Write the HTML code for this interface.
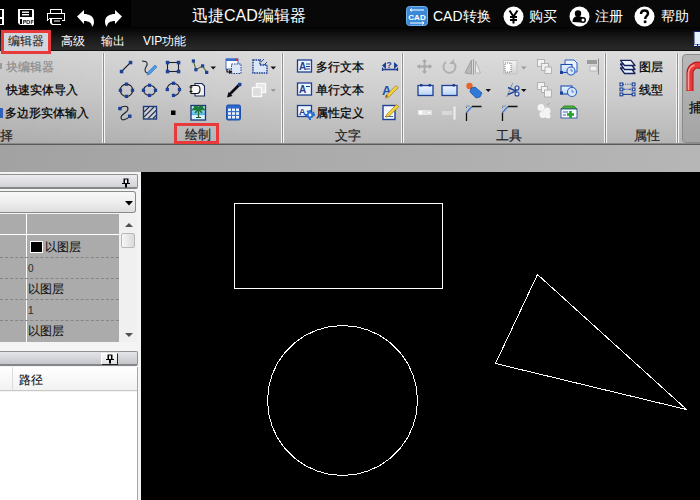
<!DOCTYPE html>
<html><head><meta charset="utf-8">
<style>
*{margin:0;padding:0;box-sizing:border-box}
html,body{width:700px;height:500px;overflow:hidden;background:#000;font-family:"Liberation Sans",sans-serif}
.a{position:absolute}
#title{left:0;top:0;width:700px;height:28px;background:linear-gradient(90deg,#000 131px,#080808 131px)}
#menu{left:0;top:27px;width:700px;height:23px;background:linear-gradient(#020202,#1a1a1a 50%,#2a2a2a)}
.wt{color:#fff;font-size:14px;line-height:16px;white-space:nowrap}
.mt{color:#fff;font-size:12px;line-height:14px;white-space:nowrap}
#ribbon{left:0;top:50px;width:700px;height:95px;background:linear-gradient(90deg,rgba(0,0,0,.05),rgba(0,0,0,0) 40%),linear-gradient(#dcdcdc,#cecece 45%,#b6b6b6);border-top:1px solid #111;border-bottom:1px solid #5a5a5a;box-shadow:inset 0 -1px 0 #8a8a8a}
.sep{width:3px;height:90px;background:linear-gradient(90deg,#f2f2f2 33%,#8e8e8e 33%,#8e8e8e 66%,#f6f6f6 66%)}
.rt{color:#000;font-size:12px;line-height:14px;white-space:nowrap;-webkit-text-stroke:0.25px #000}
.pt{color:#111;font-size:12px;line-height:14px;white-space:nowrap;-webkit-text-stroke:0.1px #111}
.lbl{color:#222;font-size:13px;line-height:14px;white-space:nowrap;-webkit-text-stroke:0.2px #222}
#band{left:0;top:145px;width:700px;height:27px;background:linear-gradient(90deg,#a2a2a2,#b6b6b6)}
#canvas{left:141px;top:172px;width:559px;height:328px;background:#000}
#panel{left:0;top:172px;width:141px;height:328px;background:#ececec}
</style></head><body>
<div id="title" class="a"></div>
<div id="menu" class="a"></div>
<div class="a wt" style="left:192px;top:7px;font-size:16px;line-height:18px">迅捷CAD编辑器</div>
<svg class="a" style="left:0;top:0" width="130" height="30">
<g fill="#fff">
<rect x="-2" y="9" width="6" height="16"/>
<rect x="-2" y="10" width="4" height="7" fill="#000"/>
<rect x="-2" y="19" width="4" height="5" fill="#000"/>
<path d="M18 9h15l1 1v15H20l-2-2z"/>
<rect x="20" y="10" width="12" height="7" fill="#000"/>
<rect x="22" y="11.5" width="7" height="1.4"/>
<rect x="22" y="14" width="7" height="1.4"/>
<rect x="20" y="19" width="2" height="5" fill="#000"/>
<rect x="22" y="19" width="12" height="6" fill="#fff"/>
<g fill="#444"><path d="M23 20h2.2a1.2 1.2 0 0 1 0 2.4H24v1.6h-1zM24 21v0.6h1.1v-0.6z"/><path d="M26.5 20h1.8c1.4 0 1.9 0.8 1.9 2s-0.5 2-1.9 2h-1.8zM27.5 21v2h0.7c0.7 0 0.9-0.4 0.9-1s-0.2-1-0.9-1z"/><path d="M30.8 20h2.7v1h-1.7v0.6h1.5v1h-1.5v1.4h-1z"/></g>
<path d="M50 9h12v4h3v8h-3v-2h-1v6H52l-2-2v-4h-2v2h-1v-8h3z M51 10v3h10v-3z M48 14v6h1v-2h13v2h2v-6z M52 19v4l1 1h8v-5z" fill-rule="evenodd"/>
<rect x="62" y="14.5" width="1.5" height="1.5" fill="#000"/>
<rect x="54" y="20.5" width="6" height="1" fill="#fff"/>
<path d="M77 16.5l7-6.5v4c5 0 10 2 10 8 0 2-1 4-2 5 0-4-3-6-8-6v3z"/>
<path d="M122 16.5l-7-6.5v4c-5 0-10 2-10 8 0 2 1 4 2 5 0-4 3-6 8-6v3z"/>
</g></svg>
<svg class="a" style="left:406px;top:6px" width="22" height="20">
<rect x="0.5" y="0.5" width="21" height="19" rx="3" fill="#3b88d6" stroke="#6fb0ee"/>
<text x="11" y="14" text-anchor="middle" font-size="8" font-weight="bold" fill="#fff" font-family="Liberation Sans">CAD</text>
<path d="M4 4h14M4 4l2-1.5M4 4l2 1.5M4 17h14M18 17l-2-1.5M18 17l-2 1.5" stroke="#fff" stroke-width="1" fill="none"/>
</svg>
<div class="a wt" style="left:433px;top:8px">CAD转换</div>
<svg class="a" style="left:503px;top:6px" width="21" height="21">
<circle cx="10.5" cy="10.5" r="10" fill="#fff"/>
<path d="M6.5 4.5l4 6 4-6M10.5 10.5v7M7 11h7M7 14h7" stroke="#000" stroke-width="2" fill="none"/>
</svg>
<div class="a wt" style="left:529px;top:8px">购买</div>
<svg class="a" style="left:569px;top:6px" width="21" height="21">
<circle cx="10.5" cy="10.5" r="10" fill="#fff"/>
<circle cx="9" cy="7.5" r="3.2" fill="#000"/>
<path d="M3.5 16c0-4 2.5-6 5.5-6s4 1 4.5 2l-1 4.5z" fill="#000"/>
<circle cx="14" cy="14" r="3" fill="#000"/><circle cx="14" cy="14" r="1.5" fill="#fff"/>
</svg>
<div class="a wt" style="left:595px;top:8px">注册</div>
<svg class="a" style="left:634px;top:6px" width="21" height="21">
<circle cx="10.5" cy="10.5" r="10" fill="#fff"/>
<path d="M7 8c0-2.2 1.6-3.5 3.6-3.5S14 5.8 14 7.6c0 2.4-2.7 2.6-2.7 4.6v0.8" stroke="#000" stroke-width="2.4" fill="none"/>
<rect x="9.8" y="14.5" width="2.6" height="2.6" fill="#000"/>
</svg>
<div class="a wt" style="left:661px;top:8px">帮助</div>
<svg class="a" style="left:693px;top:31px" width="7" height="16">
<rect x="0" y="0" width="7" height="16" fill="#14206a"/><rect x="1.5" y="1" width="5.5" height="12" fill="#e6f2fc"/><rect x="1" y="13.5" width="3" height="1.5" fill="#f0f0f0"/><rect x="5" y="13.5" width="2" height="1.5" fill="#c8ecf0"/>
</svg>
<div class="a" style="left:1px;top:30px;width:50px;height:24px;border:3px solid #e8393b;background:#d2d5db;z-index:5"></div>
<div class="a mt" style="left:8px;top:34px;color:#111;z-index:6">编辑器</div>
<div class="a mt" style="left:61px;top:34px">高级</div>
<div class="a mt" style="left:101px;top:34px">输出</div>
<div class="a mt" style="left:143px;top:34px">VIP功能</div>

<div id="ribbon" class="a">
</div>
<div class="a sep" style="left:102px;top:53px"></div>
<div class="a sep" style="left:281px;top:53px"></div>
<div class="a sep" style="left:401px;top:53px"></div>
<div class="a sep" style="left:604px;top:53px"></div>
<div class="a sep" style="left:676px;top:53px"></div>

<svg class="a" style="left:0;top:0" width="700" height="145">
<defs>
<linearGradient id="lb" x1="0" y1="0" x2="0" y2="1"><stop offset="0" stop-color="#eef5ff"/><stop offset="1" stop-color="#b9d3f3"/></linearGradient>
<linearGradient id="gb" x1="0" y1="0" x2="0" y2="1"><stop offset="0" stop-color="#f5f5f5"/><stop offset="1" stop-color="#cfcfcf"/></linearGradient>
</defs>
<!-- group1 partial icons -->
<rect x="0" y="63" width="2" height="6" fill="#9a9a9a"/>
<rect x="0" y="108" width="3" height="10" fill="#2f62b8"/>
<!-- draw: line -->
<g stroke="#1a2233" stroke-width="1.1" fill="none">
<path d="M121.5 71.5L130.5 62.5"/>
<rect x="167.5" y="62.5" width="11" height="9"/>
<circle cx="126.5" cy="90.3" r="6.2"/>
<ellipse cx="149.5" cy="90.3" rx="6" ry="5"/>
<path d="M167 89.5A6.3 6.3 0 1 1 173.5 95.8"/>
<path d="M120 108.5c3-3 8-3 8 0.5s-7 5-7 8.5 5 3 8.5-1"/>
<path d="M142 61c6 0 6 3 4 6s-1 6 2 6"/>
</g>
<g fill="#1d3f94">
<rect x="119.8" y="69.8" width="3.5" height="3.5"/><rect x="128.8" y="60.8" width="3.5" height="3.5"/>
<rect x="165.8" y="60.8" width="3.5" height="3.5"/><rect x="176.8" y="60.8" width="3.5" height="3.5"/>
<rect x="165.8" y="69.8" width="3.5" height="3.5"/><rect x="176.8" y="69.8" width="3.5" height="3.5"/>
<rect x="124.85" y="82.55" width="3.3" height="3.3"/><rect x="124.85" y="94.75" width="3.3" height="3.3"/>
<rect x="118.75" y="88.65" width="3.3" height="3.3"/><rect x="130.85" y="88.65" width="3.3" height="3.3"/>
<rect x="147.85" y="83.65" width="3.3" height="3.3"/><rect x="147.85" y="93.75" width="3.3" height="3.3"/>
<rect x="141.85" y="88.65" width="3.3" height="3.3"/><rect x="153.85" y="88.65" width="3.3" height="3.3"/>
<rect x="171.85" y="81.65" width="3.3" height="3.3"/><rect x="165.65" y="87.85" width="3.3" height="3.3"/>
<rect x="177.85" y="87.85" width="3.3" height="3.3"/><rect x="171.85" y="93.75" width="3.3" height="3.3"/>
<rect x="118.2" y="106.8" width="3.5" height="3.5"/><rect x="128" y="114.5" width="3.5" height="3.5"/>
</g>
<path d="M148 72l7-7 2 2-7 7-3 1z" fill="#4a9be8" stroke="#2a6fc0" stroke-width="0.6"/>
<!-- hatch -->
<rect x="143.5" y="106.5" width="13" height="12.5" fill="#c8d3e6" stroke="#1f3a7a" stroke-width="1.4"/>
<path d="M144 112l5-5M144 117l10-10M148 118.5l8-8M153 118.5l3-3" stroke="#333" stroke-width="1.1"/>
<rect x="171" y="110.5" width="4.5" height="4.5" fill="#000"/>
<!-- polyline -->
<path d="M193.4 61L195.9 69.7 202.6 65.9 206.7 72.4" stroke="#556b2f" stroke-width="1.1" fill="none"/>
<g fill="#1d3f94"><rect x="191.8" y="59.4" width="3.2" height="3.2"/><rect x="194.3" y="68.1" width="3.2" height="3.2"/><rect x="201" y="64.3" width="3.2" height="3.2"/><rect x="205.1" y="70.8" width="3.2" height="3.2"/></g>
<path d="M210.5 66.5h5.5l-2.75 3z" fill="#111"/>
<!-- block insert -->
<rect x="226" y="59" width="12" height="10" fill="#fff" stroke="#3a6fc8" stroke-width="1"/>
<rect x="226" y="58.5" width="9" height="2.5" fill="#3a6fc8"/><rect x="235" y="58.5" width="3" height="2.5" fill="#c8304a"/>
<rect x="231.5" y="64" width="9.5" height="9.5" fill="#dce8f8" stroke="#24408a" stroke-width="1" stroke-dasharray="1.5 1"/>
<path d="M227 69v3h4M229 70.5l2.5 1.5-2.5 1.5" stroke="#111" stroke-width="1.2" fill="none"/>
<!-- hatch boundary -->
<path d="M253 60h7v5h7v8h-14z" fill="#dbe7f7" stroke="#1d3f94" stroke-width="1.4" stroke-dasharray="1.6 0.8"/>
<path d="M261 59l-2 2M264 59l-3 3M267 62l-3 3" stroke="#1d3f94" stroke-width="0.9"/>
<path d="M270.5 66.5h5.5l-2.75 3z" fill="#111"/>
<!-- copy clip -->
<path d="M195 83.5h7l2.5 2.5v10h-9.5z" fill="#f2f2f2" stroke="#1a2a5a" stroke-width="1.1"/>
<path d="M191 85.5h6c2.5 0 3 2 3 4s-0.5 4-3 4h-6z" fill="#fafafa" stroke="#111" stroke-width="1.1"/>
<path d="M189.5 87h3M189.5 91.5h3" stroke="#000" stroke-width="1.2"/>
<!-- leader -->
<path d="M239.5 84.5L229 95" stroke="#0a0a14" stroke-width="2.6"/>
<path d="M227 97.5l1.5-5.5 4 4z" fill="#0a0a14"/>
<rect x="238" y="82.8" width="3.4" height="3.4" fill="#1d3f94"/>
<!-- grayed -->
<rect x="256.5" y="83.5" width="9" height="9" fill="#e6e6e6" stroke="#fafafa" stroke-width="1.3"/>
<rect x="252.5" y="87.5" width="9" height="9" fill="#dcdcdc" stroke="#fafafa" stroke-width="1.3"/>
<path d="M270.5 89h5.5l-2.75 3z" fill="#9a9a9a"/>
<!-- image -->
<defs><linearGradient id="sky" x1="0" y1="0" x2="0" y2="1"><stop offset="0" stop-color="#d2f0fc"/><stop offset="0.55" stop-color="#6cc4ee"/><stop offset="0.6" stop-color="#2f9ee0"/><stop offset="0.7" stop-color="#e8f8fe"/><stop offset="1" stop-color="#cdeefc"/></linearGradient></defs>
<rect x="191" y="105.5" width="14.5" height="14.5" fill="url(#sky)" stroke="#1a3578" stroke-width="1.3"/>
<path d="M198.5 117.5v-7" stroke="#2a6a30" stroke-width="1.4"/>
<path d="M198.5 109c-1.5-2-4-2-5.5 0.5 2-0.5 3.5 0 5.5 0.5zM198.5 109c1.5-2 4-2 5.5 0.5-2-0.5-3.5 0-5.5 0.5zM198.5 109c-0.5-2-2.5-3-4.5-2.5 2 0.5 3 1.5 4.5 2.5zM198.5 109c0.5-2 2.5-3 4.5-2.5-2 0.5-3 1.5-4.5 2.5zM198.5 109l-3.5 4M198.5 109l3.5 4" stroke="#1c7a3a" stroke-width="1.6" fill="#1c7a3a"/>
<path d="M196 117.5h5" stroke="#1c5a2a" stroke-width="1"/>
<!-- table -->
<rect x="226.5" y="105" width="14" height="15" rx="1.5" fill="#2a66cc" stroke="#1d4fa8" stroke-width="1"/>
<g fill="#e4f2ff"><rect x="228" y="108.5" width="3" height="2.6"/><rect x="232" y="108.5" width="3" height="2.6"/><rect x="236" y="108.5" width="3" height="2.6"/>
<rect x="228" y="112.2" width="3" height="2.6"/><rect x="232" y="112.2" width="3" height="2.6"/><rect x="236" y="112.2" width="3" height="2.6"/>
<rect x="228" y="115.9" width="3" height="2.6"/><rect x="232" y="115.9" width="3" height="2.6"/><rect x="236" y="115.9" width="3" height="2.6"/></g>
<!-- text group icons -->
<g stroke="#1d3f94" stroke-width="1.3">
<rect x="297.5" y="60" width="14" height="12" fill="#eef4fd"/>
<rect x="297.5" y="83" width="14" height="12" fill="#eef4fd"/>
<rect x="297.5" y="105.5" width="14" height="11" fill="#eef4fd"/>
</g>
<g fill="#1d3f94" font-family="Liberation Sans" font-weight="bold" font-size="10">
<text x="299" y="70">A</text><text x="299" y="93">A</text><text x="299" y="115" font-size="9">A</text>
</g>
<path d="M306 64h4M306 66.5h4M306 69h4M306 86.5h4" stroke="#1d3f94" stroke-width="1"/>
<g transform="translate(310,115)" fill="#2b6fd0"><circle r="3.2"/><path d="M-1 -5h2v10h-2zM-5 -1h10v2h-10zM-3.5 -3.5l1.4 -1.4 6 6-1.4 1.4zM3.5 -3.5l1.4 1.4-6 6-1.4-1.4z"/><circle r="1.4" fill="#fff"/></g>
<!-- dim ? -->
<path d="M383 69.5h14" stroke="#1d3f94" stroke-width="1.6"/>
<path d="M382.5 67.5v3.5M397.5 67.5v3.5" stroke="#1d3f94" stroke-width="1.2"/>
<path d="M382 65.5l4-3.5v7zM398 65.5l-4-3.5v7z" fill="#1d3f94"/>
<text x="386.6" y="68.3" font-size="8.5" font-weight="bold" fill="#1d3f94" font-family="Liberation Sans">?</text>
<!-- A pencil -->
<text x="382" y="95" font-size="13" font-weight="bold" fill="#1d4fb0" font-family="Liberation Sans">A</text>
<path d="M386.5 95l9.5-9.5 2.2 2.2-9.5 9.5-3.2 1z" fill="#f2d23a" stroke="#8a6a10" stroke-width="0.6"/>
<path d="M385.5 97l1-2.2 1.5 1.5z" fill="#902020"/>
<!-- doc edit -->
<rect x="383" y="105.5" width="12" height="14" fill="#f4f8fe" stroke="#1d3f94" stroke-width="1.4"/>
<path d="M385 116.5h8" stroke="#1d3f94" stroke-width="0.8"/>
<path d="M387 114l9.5-9.5 2.2 2.2-9.5 9.5-3.2 1z" fill="#f2d23a" stroke="#8a6a10" stroke-width="0.6"/>
<!-- tools row1 gray -->
<path d="M424.5 60v13M417.5 66.5h14" stroke="#a9a9a9" stroke-width="1.8"/>
<path d="M424.5 59l-2.5 3h5zM424.5 74l-2.5-3h5zM417 66.5l3-2.5v5zM432 66.5l-3-2.5v5z" fill="#a9a9a9"/>
<path d="M446 62a6 6 0 1 0 8 1" stroke="#b0b0b0" stroke-width="2" fill="none"/>
<path d="M454 59v5h-5z" fill="#b0b0b0"/>
<path d="M471.5 60v14L465 73zM473.5 59v16" stroke="#a0a0a0" stroke-width="1" fill="#b8b8b8"/>
<path d="M475.5 61l5 12h-5z" fill="#ececec" stroke="#a8a8a8" stroke-width="0.8"/>
<rect x="503.5" y="60.5" width="13.5" height="13.5" fill="url(#gb)" stroke="#c4c4c4"/>
<rect x="505" y="63" width="6" height="9" fill="#fff" stroke="#555" stroke-width="0.8" stroke-dasharray="1 1"/>
<path d="M521 66.5h5.5l-2.75 3z" fill="#9a9a9a"/>
<!-- tools row2 -->
<rect x="418" y="85.5" width="15" height="10" fill="url(#lb)" stroke="#1d3f94" stroke-width="1.3"/>
<rect x="420" y="84" width="2.5" height="2.5" fill="#1d3f94"/><rect x="428.5" y="84" width="2.5" height="2.5" fill="#1d3f94"/>
<rect x="442" y="85.5" width="15" height="10" fill="url(#lb)" stroke="#1d3f94" stroke-width="1.3"/>
<rect x="452.5" y="84" width="2.5" height="2.5" fill="#1d3f94"/>
<circle cx="469.5" cy="86" r="3.2" fill="#e8642a"/>
<path d="M471 88l4-1 7 6-2 4-4 1-6-6z" fill="#2f7ad8" stroke="#1a4a98" stroke-width="0.7"/>
<path d="M485.5 89h5.5l-2.75 3z" fill="#111"/>
<path d="M507 96.5l5.5-13" stroke="#1d3f94" stroke-width="0.9" stroke-dasharray="1.2 1"/>
<path d="M508 87.5l8 3.5-8 3.5" stroke="#1d3f94" stroke-width="1.4" fill="none"/>
<circle cx="517" cy="88" r="2" fill="#dce8fa" stroke="#1d3f94" stroke-width="1.1"/><circle cx="517" cy="94" r="2" fill="#dce8fa" stroke="#1d3f94" stroke-width="1.1"/>
<path d="M521 89h5.5l-2.75 3z" fill="#111"/>
<!-- tools row3 -->
<rect x="418" y="110" width="14" height="5" fill="#e8e8e8"/>
<rect x="419" y="111" width="3" height="3" fill="#fff"/><rect x="427" y="111" width="4" height="3" fill="#fafafa" stroke="#c8c8c8" stroke-width="0.6"/>
<rect x="442" y="111" width="10" height="4" fill="#d8d8d8"/><rect x="453" y="106" width="3" height="14" fill="#ececec" stroke="#c0c0c0" stroke-width="0.7"/>
<path d="M466.5 121v-8.5M472 106.5h9.5" stroke="#111" stroke-width="1.3" fill="none"/><path d="M466.5 112.5l5.5-6" stroke="#3a7ad0" stroke-width="1.3"/>

<path d="M466.5 108v-2h3" stroke="#1d3f94" stroke-width="0.8" stroke-dasharray="1 1" fill="none"/>
<path d="M502.5 121v-8.5M508 106.5h9.5" stroke="#111" stroke-width="1.3" fill="none"/><path d="M502.5 112.5l5.5-6" stroke="#3a7ad0" stroke-width="1.3"/>

<path d="M502.5 108v-2h3" stroke="#1d3f94" stroke-width="0.8" stroke-dasharray="1 1" fill="none"/>
<!-- gray col A -->
<g fill="#f2f2f2" stroke="#a6a6a6" stroke-width="0.8">
<rect x="537.5" y="59.5" width="7" height="7"/><rect x="541.5" y="63.5" width="7" height="7"/><rect x="545" y="67" width="6.5" height="6.5"/>
<rect x="537.5" y="82.5" width="7" height="7"/><rect x="541.5" y="86.5" width="6" height="6"/><rect x="544.5" y="90" width="7" height="7"/>
</g>
<g fill="#f4f4f4"><circle cx="541" cy="107.5" r="3.5"/><circle cx="547" cy="111" r="3.5"/><circle cx="543" cy="114.5" r="3.5"/><circle cx="548" cy="116" r="2.5"/></g>
<path d="M547 105l3-2" stroke="#a0a0a0" stroke-width="0.8"/>
<!-- blue col B -->
<path d="M565 60h9l3 3v9h-12z" fill="#eaf2fc" stroke="#2a5fc0" stroke-width="1"/>
<rect x="561" y="64.5" width="11" height="8" fill="url(#lb)" stroke="#1d4fb0" stroke-width="1.1"/>
<circle cx="571" cy="71" r="4" fill="#dce9fa" stroke="#2a5fc0" stroke-width="1.1"/><path d="M571 69v2h2" stroke="#2a5fc0" stroke-width="0.8" fill="none"/>
<rect x="560" y="71" width="3" height="3" fill="#1d3f94"/>
<rect x="561" y="86" width="11" height="8" fill="url(#lb)" stroke="#1d4fb0" stroke-width="1.1"/>
<circle cx="572" cy="92" r="4.5" fill="#dce9fa" stroke="#2a5fc0" stroke-width="1.1"/><path d="M572 89.5v2.5h2" stroke="#2a5fc0" stroke-width="0.8" fill="none"/>
<rect x="560" y="91.5" width="3" height="3" fill="#1d3f94"/>
<path d="M561 109l3-3h10l3 3z" fill="#4caf3c" stroke="#2a7a22" stroke-width="0.8"/>
<rect x="561" y="109" width="16" height="9" fill="#f4f8fe" stroke="#1d3f94" stroke-width="0.8"/>
<path d="M563 112h5M563 115h3" stroke="#1d3f94" stroke-width="0.8"/>
<path d="M570.5 111v7M567 114.5h7" stroke="#22a02a" stroke-width="2.6"/>
<!-- gray col C -->
<rect x="587" y="60" width="10" height="4" fill="#9a9a9a"/>
<rect x="590" y="66" width="7" height="5" fill="#f0f0f0" stroke="#b0b0b0" stroke-width="0.8"/>
<path d="M598.5 58.5v16" stroke="#8a8a8a" stroke-width="1"/>
<!-- properties -->
<g stroke="#15225e" stroke-width="1.3" fill="#eef5fc" stroke-linejoin="round">
<path d="M620.5 68l4 5.5h10.5l-4-5.5z"/><path d="M620.5 64l4 5.5h10.5l-4-5.5z"/><path d="M620.5 60.3l4 5.2h10.5l-4-5.2z"/>
</g>
<path d="M623 84.3h9" stroke="#1d3f94" stroke-width="1.1" stroke-dasharray="1 1.2"/>
<path d="M623 89.3h9" stroke="#1d3f94" stroke-width="1.1" stroke-dasharray="2.5 1 1 1"/>
<path d="M623 94.4h9" stroke="#1d3f94" stroke-width="1.1"/>
<g fill="#cfe4fb" stroke="#1d3f94" stroke-width="1.1"><rect x="620" y="83" width="2.8" height="2.8"/><rect x="632.2" y="83" width="2.8" height="2.8"/><rect x="620" y="88" width="2.8" height="2.8"/><rect x="632.2" y="88" width="2.8" height="2.8"/><rect x="620" y="93" width="2.8" height="2.8"/><rect x="632.2" y="93" width="2.8" height="2.8"/></g>
</svg>
<!-- big button -->
<div class="a" style="left:682px;top:54px;width:30px;height:89px;border:1px solid #8a8a8a;border-radius:4px;background:linear-gradient(#b8b8b8,#a4a4a4)"></div>
<svg class="a" style="left:682px;top:60px" width="18" height="34"><path d="M8 31V13a8 8 0 0 1 16 0v18" stroke="#b01818" stroke-width="7" fill="none"/><path d="M8 31V13a8 8 0 0 1 16 0v18" stroke="#e83838" stroke-width="5" fill="none"/><path d="M6.5 30V13a9 9 0 0 1 6-8" stroke="#ff9a9a" stroke-width="1.6" fill="none"/></svg>
<div class="a rt" style="left:689px;top:101px;font-size:13px;color:#111">捕</div>
<div class="a rt" style="left:6px;top:60px;color:#8c8c8c;-webkit-text-stroke:0.2px #8c8c8c">块编辑器</div>
<div class="a rt" style="left:6px;top:83px">快速实体导入</div>
<div class="a rt" style="left:5px;top:106px">多边形实体输入</div>
<div class="a lbl" style="left:0px;top:129px">择</div>
<div class="a" style="left:174px;top:123px;width:45px;height:21px;border:3px solid #e8393b"></div>
<div class="a lbl" style="left:185px;top:128px">绘制</div>
<div class="a rt" style="left:316px;top:60px">多行文本</div>
<div class="a rt" style="left:316px;top:83px">单行文本</div>
<div class="a rt" style="left:316px;top:106px">属性定义</div>
<div class="a lbl" style="left:335px;top:129px">文字</div>
<div class="a lbl" style="left:496px;top:129px">工具</div>
<div class="a rt" style="left:639px;top:60px">图层</div>
<div class="a rt" style="left:639px;top:83px">线型</div>
<div class="a lbl" style="left:634px;top:129px">属性</div>

<div id="band" class="a"></div>
<div id="canvas" class="a">
<svg width="559" height="328" style="position:absolute;left:0;top:0">
<g fill="none" stroke="#fff" stroke-width="1" transform="translate(-141,-172)" shape-rendering="crispEdges">
<rect x="234.5" y="203.5" width="208" height="85"/>
<polygon points="417.50,400.50 416.36,413.52 412.98,426.15 407.45,438.00 399.95,448.71 390.71,457.95 380.00,465.45 368.15,470.98 355.52,474.36 342.50,475.50 329.48,474.36 316.85,470.98 305.00,465.45 294.29,457.95 285.05,448.71 277.55,438.00 272.02,426.15 268.64,413.52 267.50,400.50 268.64,387.48 272.02,374.85 277.55,363.00 285.05,352.29 294.29,343.05 305.00,335.55 316.85,330.02 329.48,326.64 342.50,325.50 355.52,326.64 368.15,330.02 380.00,335.55 390.71,343.05 399.95,352.29 407.45,363.00 412.98,374.85 416.36,387.48"/>
<polygon points="537.5,274.5 495.5,363.5 686.5,409.5"/>
</g></svg>
</div>
<div id="panel" class="a">
<div class="a" style="left:0;top:0;width:141px;height:328px;background:#f4f4f4"></div>
<div class="a" style="left:0;top:2px;width:138px;height:15px;background:linear-gradient(#ececef,#d2d3d7);border:1px solid #8f9094;border-bottom:2px solid #85868a;border-left:none;border-radius:0 2px 2px 0"></div>
<svg class="a" style="left:121px;top:6px" width="10" height="10"><path d="M2.5 0.5h5v4.5h1.5v1h-3v3.5h-2V6h-3V5h1.5z" fill="#000"/><rect x="4" y="1.5" width="2" height="3.5" fill="#e8e8e8"/></svg>
<div class="a" style="left:0;top:19px;width:136px;height:22px;background:linear-gradient(#f8f8f8,#efefef 50%,#dedede);border:1px solid #8a8a8a;border-left:none;border-radius:0 3px 3px 0"></div>
<svg class="a" style="left:125px;top:29px" width="8" height="5"><path d="M0 0h8L4 4.5z" fill="#000"/></svg>
<div class="a" style="left:0;top:42px;width:119px;height:128px;background:#ababab"></div>
<div class="a" style="left:26px;top:42px;width:1px;height:128px;background:#fff"></div>
<div class="a" style="left:0;top:62px;width:119px;height:1px;background:#fff"></div>
<div class="a" style="left:0;top:85px;width:119px;height:0;border-top:1px dashed #858585"></div>
<div class="a" style="left:0;top:106px;width:119px;height:0;border-top:1px dashed #858585"></div>
<div class="a" style="left:0;top:127px;width:119px;height:0;border-top:1px dashed #858585"></div>
<div class="a" style="left:0;top:148px;width:119px;height:0;border-top:1px dashed #858585"></div>
<div class="a" style="left:31px;top:70px;width:11px;height:10px;background:#000;outline:1px solid #fff"></div>
<div class="a pt" style="left:45px;top:68px">以图层</div>
<div class="a pt" style="left:28px;top:90px;font-size:10px;color:#333">0</div>
<div class="a pt" style="left:28px;top:110px">以图层</div>
<div class="a pt" style="left:28px;top:132px;font-size:10px;color:#333">1</div>
<div class="a pt" style="left:28px;top:152px">以图层</div>
<div class="a" style="left:119px;top:42px;width:18px;height:128px;background:#f0f0f0"></div>
<svg class="a" style="left:125px;top:51px" width="8" height="4"><path d="M0 4L4 0 8 4z" fill="#505050"/></svg>
<div class="a" style="left:121px;top:61px;width:14px;height:15px;background:linear-gradient(90deg,#f6f6f6,#dadada);border:1px solid #b8b8b8;border-radius:2px"></div>
<svg class="a" style="left:125px;top:161px" width="8" height="4"><path d="M0 0h8L4 4z" fill="#505050"/></svg>
<div class="a" style="left:0;top:179px;width:138px;height:15px;background:linear-gradient(#e4e5e8,#c6c7ca);border:1px solid #8f9094;border-bottom:2px solid #85868a;border-left:none;border-radius:0 2px 2px 0"></div>
<div class="a" style="left:101px;top:181px;width:17px;height:12px;background:linear-gradient(#fafafa,#e2e2e2);border:1px solid #222;border-top-color:#fff;border-left-color:#fff"></div>
<svg class="a" style="left:105px;top:182px" width="10" height="10"><path d="M2.5 0.5h5v4.5h1.5v1h-3v3.5h-2V6h-3V5h1.5z" fill="#000"/><rect x="4" y="1.5" width="2" height="3.5" fill="#e8e8e8"/></svg>
<div class="a" style="left:0;top:195px;width:138px;height:24px;background:linear-gradient(#fff,#f2f2f2);border:1px solid #c8c8c8;border-left:none;border-top:none"></div>
<div class="a" style="left:12px;top:195px;width:1px;height:23px;background:#dcdcdc"></div>
<div class="a pt" style="left:19px;top:201px">路径</div>
<div class="a" style="left:0;top:220px;width:137px;height:108px;background:#fff"></div>
<div class="a" style="left:137px;top:195px;width:1px;height:133px;background:#a8a8a8"></div>
</div>
</body></html>
